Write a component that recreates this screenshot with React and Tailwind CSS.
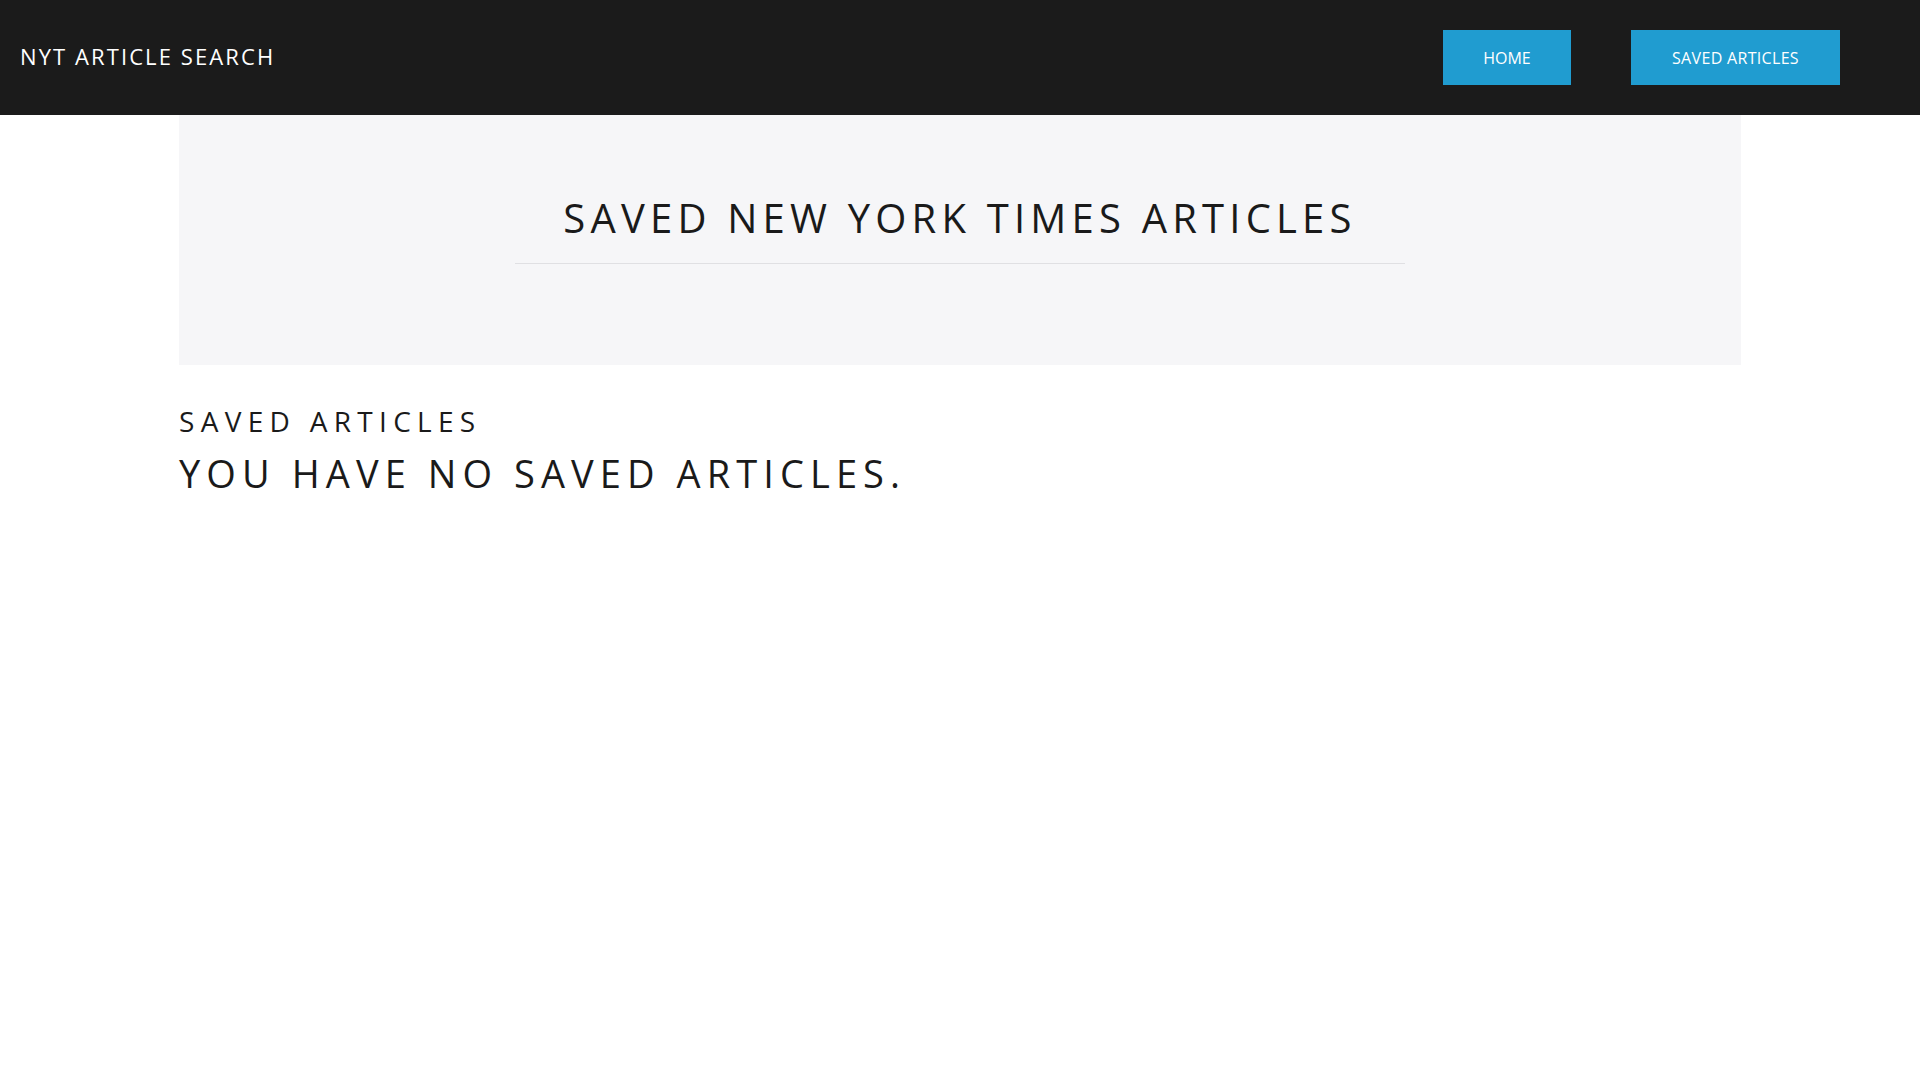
export default function App() {
  return (
    <div className="min-h-screen bg-white text-[#1a1a1a]" style={{ fontFamily: '"Open Sans", "Noto Sans", sans-serif' }}>
      <nav className="h-[115px] bg-[#1b1b1b] flex items-center justify-between pl-[20px] pr-[80px]">
        <span className="text-white text-[22px] tracking-[0.095em] -mt-[2px]">NYT ARTICLE SEARCH</span>
        <div className="flex gap-[60px]">
          <a className="w-[128px] h-[55px] bg-[#209cd0] text-white text-[16px] flex items-center justify-center">HOME</a>
          <a className="w-[209px] h-[55px] bg-[#209cd0] text-white text-[16px] tracking-[0.02em] flex items-center justify-center">SAVED ARTICLES</a>
        </div>
      </nav>
      <main className="w-[1562px] mx-auto">
        <section className="h-[250px] bg-[#f6f6f8] flex flex-col items-center pt-[77px]">
          <h1 className="text-[40px] leading-[52px] tracking-[0.13em]">SAVED NEW YORK TIMES ARTICLES</h1>
          <hr className="w-[890px] mt-[19px] border-t border-[#e0e0e3]" />
        </section>
        <h3 className="mt-[38px] text-[28px] leading-[36px] tracking-[0.225em]">SAVED ARTICLES</h3>
        <h2 className="mt-[10px] text-[38px] leading-[48px] tracking-[0.16em]">YOU HAVE NO SAVED ARTICLES.</h2>
      </main>
    </div>
  );
}
